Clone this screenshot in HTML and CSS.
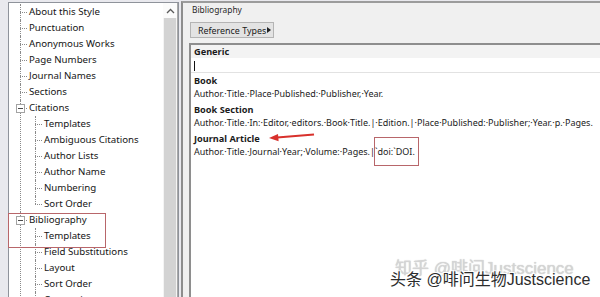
FILE: index.html
```html
<!DOCTYPE html>
<html lang="en">

<head>
  <meta charset="UTF-8" />
  <title>Bibliography Templates</title>
  <link rel="stylesheet" href="styles.css">
</head>

<body>
  <div class="window">
    <div class="nav">
      <div class="tree">
        <ul class="root">
          <li><span>About this Style</span></li>
          <li><span>Punctuation</span></li>
          <li><span>Anonymous Works</span></li>
          <li><span>Page Numbers</span></li>
          <li><span>Journal Names</span></li>
          <li><span>Sections</span></li>
          <li class="open"><i class="toggle"></i><span>Citations</span>
            <ul>
              <li><span>Templates</span></li>
              <li><span>Ambiguous Citations</span></li>
              <li><span>Author Lists</span></li>
              <li><span>Author Name</span></li>
              <li><span>Numbering</span></li>
              <li><span>Sort Order</span></li>
            </ul>
          </li>
          <li class="open"><i class="toggle"></i><span>Bibliography</span>
            <ul>
              <li><span>Templates</span></li>
              <li><span>Field Substitutions</span></li>
              <li><span>Layout</span></li>
              <li><span>Sort Order</span></li>
              <li><span>Categories</span></li>
            </ul>
          </li>
          <li><span>Footnotes</span></li>
        </ul>
      </div>
      <div class="scrollbar">
        <div class="scroll-btn">
          <svg width="9" height="6" viewBox="0 0 9 6"><path d="M1 5 L4.5 1.5 L8 5" fill="none" stroke="#5a5a5a" stroke-width="1.3"/></svg>
        </div>
        <div class="thumb"></div>
      </div>
      <div class="callout callout-nav"></div>
    </div>

    <div class="pane">
      <div class="pane-title">Bibliography</div>
      <div class="toolbar">
        <button class="ref-types">Reference Types<svg width="4" height="6" viewBox="0 0 4 6"><path d="M0 0 L4 3 L0 6 Z" fill="#222"/></svg></button>
      </div>
      <div class="editor">
        <div class="type-head">Generic</div>
        <div class="cursor-row"><span class="caret"></span></div>
        <div class="entry">
          <div class="type">Book</div>
          <div class="template">Author.·Title.·Place·Published:·Publisher,·Year.</div>
        </div>
        <div class="entry">
          <div class="type">Book Section</div>
          <div class="template">Author.·Title.·In:·Editor,·editors.·Book·Title.|·Edition.|·Place·Published:·Publisher;·Year.·p.·Pages.</div>
        </div>
        <div class="entry">
          <div class="type">Journal Article</div>
          <div class="template">Author.·Title.·Journal·Year;·Volume:·Pages.|<span class="mark">`doi:`DOI.</span></div>
        </div>
        <svg class="arrow" width="50" height="10" viewBox="0 0 50 10">
          <path d="M46 1.5 L9 4.6" stroke="#d8312c" stroke-width="2" fill="none"/>
          <path d="M1 5 L10 1 L10.6 8.2 Z" fill="#d8312c"/>
        </svg>
      </div>
    </div>

    <div class="watermark">
      <div class="wm-back">知乎 @啡问Justscience</div>
      <div class="wm-front">头条 @啡问生物Justscience</div>
    </div>
  </div>
</body>

</html>
```

FILE: styles.css
```css
* {
  box-sizing: border-box;
  margin: 0;
  padding: 0;
}

body {
  width: 600px;
  height: 297px;
  overflow: hidden;
  background: #e9e9ee;
  font-family: "Noto Sans", Arial, sans-serif;
  color: #1b1b1b;
}

.window {
  position: relative;
  display: flex;
  height: 297px;
}

/* left tree */
.nav {
  position: relative;
  display: flex;
  width: 171px;
  margin: 2px 0 0 8px;
  border: 1px solid #8f939b;
  border-bottom: none;
  background: #fff;
}

.tree {
  flex: 1;
  overflow: hidden;
  padding-top: 1px;
  font-size: 9.7px;
  color: #151515;
}

.tree ul {
  list-style: none;
}

.tree li {
  position: relative;
  padding-left: 20px;
}

.tree li > span {
  display: block;
  height: 16px;
  line-height: 16px;
  white-space: nowrap;
}

.tree li::before {
  content: "";
  position: absolute;
  left: 11px;
  top: 8px;
  width: 7px;
  border-top: 1px dotted #8a8a8a;
}

.tree li::after {
  content: "";
  position: absolute;
  left: 11px;
  top: 0;
  bottom: 0;
  border-left: 1px dotted #8a8a8a;
}

.tree ul ul li:last-child::after {
  bottom: auto;
  height: 8px;
}

.tree li ul {
  margin-left: -5px;
}

.toggle {
  position: absolute;
  left: 7px;
  top: 4px;
  width: 9px;
  height: 9px;
  border: 1px solid #a3a3a3;
  background: #fff;
  z-index: 1;
}

.toggle::after {
  content: "";
  position: absolute;
  left: 1px;
  top: 3px;
  width: 5px;
  height: 1px;
  background: #4a4a4a;
}

.scrollbar {
  width: 15px;
  display: flex;
  flex-direction: column;
  background: #f4f4f4;
  border-right: 1px solid #a9a9a9;
}

.scroll-btn {
  height: 15px;
  display: flex;
  align-items: center;
  justify-content: center;
  background: #fbfbfb;
}

.thumb {
  flex: 1;
  margin: 0 1px;
  background: #d3d3d3;
}

.callout {
  position: absolute;
  border: 1px solid #b8666a;
}

.callout-nav {
  left: -1px;
  top: 210px;
  width: 98px;
  height: 35px;
}

/* right pane */
.pane {
  flex: 1;
  margin: 1px 0 0 2px;
  border-top: 2px solid #9c9c9c;
  border-left: 2px solid #8d8d8d;
  background: #f0f0f0;
  display: flex;
  flex-direction: column;
}

.pane-title {
  padding: 1px 0 0 9px;
  font-size: 8.4px;
  line-height: 11px;
  color: #2a2a2a;
}

.toolbar {
  display: flex;
  padding: 7px 0 0 7px;
}

.ref-types {
  display: flex;
  align-items: center;
  gap: 1px;
  height: 16px;
  padding: 0 2px 0 7px;
  border: 1px solid #b4b4b4;
  background: #e3e3e3;
  font-family: inherit;
  font-size: 8.9px;
  color: #1b1b1b;
}

.editor {
  position: relative;
  flex: 1;
  margin: 5px 0 0 6px;
  border-top: 2px solid #8e8e8e;
  border-left: 2px solid #8e8e8e;
  background: #fff;
  font-size: 9px;
}

.type-head,
.type {
  padding-left: 3px;
  font-weight: bold;
  font-size: 9.2px;
  line-height: 13px;
}

.type-head {
  background: #f3f3f3;
}

.cursor-row {
  height: 15px;
  padding: 3px 0 0 3px;
  border-bottom: 1px solid #e2e2e2;
}

.caret {
  display: block;
  width: 1px;
  height: 10px;
  background: #111;
}

.entry {
  margin-top: 1px;
}

.entry + .entry {
  margin-top: 3px;
}

.template {
  padding-left: 3px;
  line-height: 13px;
  white-space: nowrap;
}

.mark {
  position: relative;
}

.mark::after {
  content: "";
  position: absolute;
  left: -1px;
  right: -4px;
  top: -8px;
  bottom: -8px;
  border: 1px solid #b8666a;
}

.arrow {
  position: absolute;
  left: 77px;
  top: 88px;
}

/* watermark */
.watermark {
  position: absolute;
  left: 390px;
  top: 260px;
  font-family: "Liberation Sans", "Noto Sans CJK SC", sans-serif;
  white-space: nowrap;
}

.wm-back {
  margin-left: 5px;
  font-size: 17px;
  line-height: 17px;
  color: rgba(215, 215, 215, 0.9);
  text-shadow: 0 0 1px #bbb;
}

.wm-front {
  margin-top: -6px;
  font-size: 16px;
  line-height: 17px;
  color: #2c2c2c;
  text-shadow: 1px 1px 0 #fff, -1px -1px 0 #fff, 1px -1px 0 #fff, -1px 1px 0 #fff;
}
```
